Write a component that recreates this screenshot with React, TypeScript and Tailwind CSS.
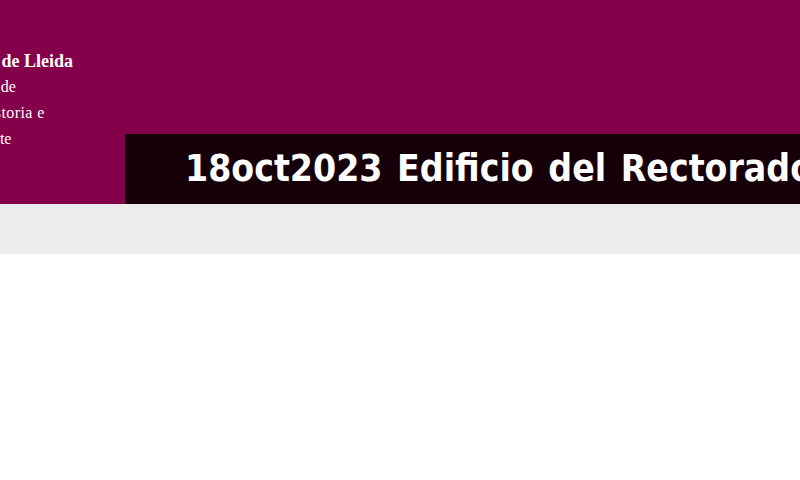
import React from "react";

export default function App() {
  return (
    <div className="w-full min-h-[480px] bg-white">
      <header className="flex h-[204px] bg-[#85004a]">
        <div className="w-[125px] shrink-0 overflow-hidden pt-[48px] text-white font-['Liberation_Serif',serif]">
          <div className="ml-[-89px] whitespace-nowrap text-[18px] font-bold leading-[26px]">Universitat de Lleida</div>
          <div className="ml-[-94px] whitespace-nowrap text-[16px] leading-[26px]">Departamento de</div>
          <div className="ml-[-22px] whitespace-nowrap text-[16px] leading-[26px] tracking-[0.4px]">Historia e</div>
          <div className="ml-[-17px] whitespace-nowrap text-[16px] leading-[26px]">Arte</div>
        </div>
        <div className="flex min-w-0 flex-1 items-end">
          <div className="h-[70px] w-full overflow-hidden whitespace-nowrap bg-[#150009] pl-[60px]">
            <h1 className="font-['DejaVu_Sans_Condensed','DejaVu_Sans',sans-serif] text-[37px] font-bold leading-[70px] [word-spacing:3px] text-white">
              18oct2023 Edificio del Rectorado
            </h1>
          </div>
        </div>
      </header>
      <div className="h-[50px] bg-[#ededed]" />
    </div>
  );
}
